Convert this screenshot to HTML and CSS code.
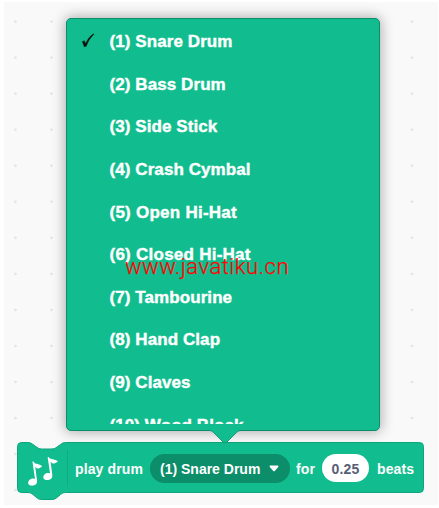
FILE: index.html
```html
<!DOCTYPE html>
<html lang="en">
<head>
<meta charset="utf-8">
<title>Play drum block</title>
<link rel="stylesheet" href="styles.css">
</head>
<body>
<main class="workspace">
  <div class="menu">
    <ul class="menu-list">
      <li class="item"><svg class="check" viewBox="0 0 14 15"><path d="M1.2 8.7 3.3 7.7 4.8 10.4C6.8 6.1 9 3 12.6.8L12.9 1.2C9.4 4.7 7 8.3 5.3 13.3L3.2 13.8C2.7 11.7 2.1 10.2 1.2 8.7Z"/></svg><span>(1) Snare Drum</span></li>
      <li class="item"><span>(2) Bass Drum</span></li>
      <li class="item"><span>(3) Side Stick</span></li>
      <li class="item"><span>(4) Crash Cymbal</span></li>
      <li class="item"><span class="wide">(5) Open Hi-Hat</span></li>
      <li class="item"><span class="wide">(6) Closed Hi-Hat</span></li>
      <li class="item"><span>(7) Tambourine</span></li>
      <li class="item"><span>(8) Hand Clap</span></li>
      <li class="item"><span>(9) Claves</span></li>
      <li class="item"><span>(10) Wood Block</span></li>
    </ul>
    <svg class="pointer" viewBox="0 0 32 16"><path class="pointer-fill" d="M1 0H31V1.5Q29 2 27.5 3.5L18 13Q16 15 14 13L4.5 3.5Q3 2 1 1.5Z"/><path class="pointer-edge" d="M1 1.5Q3 2 4.5 3.5L14 13Q16 15 18 13L27.5 3.5Q29 2 31 1.5"/></svg>
  </div>
  <div class="block">
    <svg class="block-shape" viewBox="0 0 408 60"><path d="M.5 4.5Q.5.5 4.5.5H11Q14 .5 16 2.5L19.5 5Q21.5 7 24.5 7H35Q38 7 40 5L43.500 2.500Q45.500.5 48.500.5H402.500Q406.500 .5 406.500 4.500V46.500Q406.500 50.500 402.500 50.500H48.500Q45.500 50.500 43.500 52.500L40 55.500Q38 57.500 35 57.500H24.500Q21.500 57.500 19.500 55.500L16 52.500Q14 50.500 11 50.500H4.500Q.5 50.500 .5 46.500Z"/></svg>
    <svg class="notes" viewBox="0 0 32 30"><path d="M5.500 5C5.500 3.800 6.500 4.200 6.900 5.200 8.100 7.200 13 6.800 15 9.100 15.400 10 13.700 10.300 12.700 11 11.200 12 9.600 11.600 8.200 9.700L10 23.500C10.600 27.500 7 29 4 28.600 1.200 28.200.3 25.600 2 23.500 3.700 21.500 5.900 21.100 8 22Z"/><path d="M20.700.7C20.700-.5 21.700-.2 22.100.7 23.400 2.500 28.500 2 30.600 4.200 31 5 29.200 5.400 28.200 6 26.700 7 25.300 6.600 23.600 4.700L25.300 18C25.800 22 22.300 23.400 19.200 23 16.400 22.600 15.400 20.100 17.100 18 18.800 16 21.100 15.600 23.100 16.500Z"/></svg>
    <span class="divider"></span>
    <span class="label play">play drum</span>
    <span class="dropdown"><span class="value">(1) Snare Drum</span><svg class="caret" viewBox="0 0 10 7"><path d="M1.200.5H8.800Q10 .8 9.200 1.900L6 5.700Q5 6.700 4 5.700L.8 1.900Q0 .8 1.200.5Z"/></svg></span>
    <span class="label for">for</span>
    <span class="number">0.25</span>
    <span class="label beats">beats</span>
  </div>
  <div class="watermark">www.javatiku.cn</div>
</main>
</body>
</html>
```
FILE: styles.css
```css
* { box-sizing: border-box; }
body { margin: 0; background: #fff; font-family: "Liberation Sans", Arial, sans-serif; }
.workspace {
  position: relative;
  width: 434px;
  height: 503px;
  margin: 2px 0 0 4px;
  padding: 16px 0 0 13px;
  background: radial-gradient(circle at 11.500px 19.500px, #dedede 0, #e2e2e2 .8px, transparent 1.700px) 0 0 / 36.050px 36.050px #f9f9f9;
}
.menu {
  position: relative;
  z-index: 2;
  width: 314px;
  height: 413px;
  margin-left: 49px;
  padding-top: 2px;
  background: #11bd8e;
  border: 1px solid #0b8e69;
  border-radius: 5px;
  box-shadow: 0 0 13px 1px rgba(0, 0, 0, .32);
}
.menu-list { height: 403px; margin: 0; padding: 0; overflow: hidden; list-style: none; }
.item {
  display: grid;
  grid-template-columns: 42.500px 1fr;
  align-items: center;
  height: 42.600px;
  color: #fff;
  font-size: 17px;
  font-weight: 700;
  letter-spacing: .08px;
  white-space: nowrap;
  -webkit-text-stroke: .4px #fff;
}
.item span { grid-column: 2; }
.item .wide { letter-spacing: .25px; }
.check { grid-row: 1; width: 14px; height: 15px; margin: -3px 0 0 14px; fill: #06150f; stroke: #06150f; stroke-width: .4; }
.pointer { position: absolute; left: 142px; top: 410px; width: 32px; height: 16px; }
.pointer-fill { fill: #11bd8e; }
.pointer-edge { fill: none; stroke: #0b8e69; stroke-width: .8; }
.block {
  position: relative;
  display: flex;
  align-items: center;
  width: 408px;
  height: 52px;
  margin-top: 11px;
  color: #fff;
  font-size: 14px;
  font-weight: 700;
  white-space: nowrap;
}
.block > * { position: relative; flex: none; }
.block .block-shape { position: absolute; left: 0; top: 0; width: 408px; height: 60px; fill: #11bd8e; stroke: #0da57b; stroke-width: 1; }
.notes { width: 32px; height: 30px; margin: 7px 0 0 10px; fill: #fff; }
.divider { width: 1px; height: 37px; margin-left: 8px; background: #0eac80; }
.label { line-height: 20px; padding-top: 2px; letter-spacing: .12px; }
.play { width: 75px; margin-left: 7px; }
.dropdown {
  display: flex;
  align-items: center;
  width: 140px;
  height: 29px;
  padding-left: 10px;
  background: #0b8e69;
  border-radius: 15px;
}
.value { width: 109px; padding-top: 1px; }
.caret { width: 10px; height: 7px; fill: #fff; }
.for { width: 26px; margin-left: 6px; }
.number {
  width: 47px;
  height: 28px;
  line-height: 30px;
  border-radius: 14px;
  background: #fff;
  color: #575e75;
  letter-spacing: .2px;
  text-align: center;
}
.beats { margin-left: 8px; }
.watermark {
  position: absolute;
  z-index: 3;
  left: 121px;
  top: 252px;
  color: #f00;
  font-family: Roboto, "Liberation Sans", sans-serif;
  font-weight: 300;
  font-size: 22px;
  letter-spacing: .52px;
  line-height: 26px;
  white-space: nowrap;
  -webkit-text-stroke: .25px #f00;
}
```
